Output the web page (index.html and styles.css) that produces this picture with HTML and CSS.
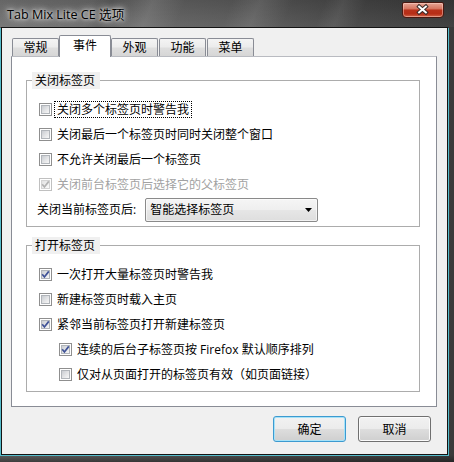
FILE: index.html
```html
<!DOCTYPE html>
<html lang="zh-CN">
<head>
<meta charset="utf-8">
<title>Tab Mix Lite CE 选项</title>
<link rel="stylesheet" href="styles.css">
</head>
<body>
<div class="window">
  <div class="titlebar">
    <span class="title">Tab Mix Lite CE 选项</span>
    <button class="close" aria-label="关闭">
      <svg width="42" height="16" viewBox="0 0 42 16">
        <path class="x-outline" d="M17.5 4.5 L24.5 10.5 M24.5 4.5 L17.5 10.5"/>
        <path class="x-core" d="M17.5 4.5 L24.5 10.5 M24.5 4.5 L17.5 10.5"/>
      </svg>
    </button>
  </div>

  <div class="edge">
    <div class="client">
      <div class="tabs">
        <div class="tab">常规</div>
        <div class="tab sel">事件</div>
        <div class="tab">外观</div>
        <div class="tab">功能</div>
        <div class="tab">菜单</div>
      </div>

      <div class="panel">
        <fieldset class="group">
          <legend>关闭标签页</legend>
          <label class="opt">
            <span class="cb"><span class="cb-in"></span></span>
            <span class="txt focus">关闭多个标签页时警告我</span>
          </label>
          <label class="opt">
            <span class="cb"><span class="cb-in"></span></span>
            <span class="txt">关闭最后一个标签页时同时关闭整个窗口</span>
          </label>
          <label class="opt">
            <span class="cb"><span class="cb-in"></span></span>
            <span class="txt">不允许关闭最后一个标签页</span>
          </label>
          <label class="opt disabled">
            <span class="cb"><span class="cb-in"><svg class="tick" width="9" height="9" viewBox="0 0 9 9"><path d="M1.2 4.3 L3.4 7 L7.8 1.4"/></svg></span></span>
            <span class="txt">关闭前台标签页后选择它的父标签页</span>
          </label>
          <div class="opt combo-row">
            <span class="combo-label">关闭当前标签页后:</span>
            <div class="combo">
              <span>智能选择标签页</span>
              <svg class="arrow" width="7" height="4" viewBox="0 0 7 4"><path d="M0 0 H7 L3.5 4 Z"/></svg>
            </div>
          </div>
        </fieldset>

        <fieldset class="group second">
          <legend>打开标签页</legend>
          <label class="opt">
            <span class="cb"><span class="cb-in"><svg class="tick" width="9" height="9" viewBox="0 0 9 9"><path d="M1.2 4.3 L3.4 7 L7.8 1.4"/></svg></span></span>
            <span class="txt">一次打开大量标签页时警告我</span>
          </label>
          <label class="opt">
            <span class="cb"><span class="cb-in"></span></span>
            <span class="txt">新建标签页时载入主页</span>
          </label>
          <label class="opt">
            <span class="cb"><span class="cb-in"><svg class="tick" width="9" height="9" viewBox="0 0 9 9"><path d="M1.2 4.3 L3.4 7 L7.8 1.4"/></svg></span></span>
            <span class="txt">紧邻当前标签页打开新建标签页</span>
          </label>
          <label class="opt sub">
            <span class="cb"><span class="cb-in"><svg class="tick" width="9" height="9" viewBox="0 0 9 9"><path d="M1.2 4.3 L3.4 7 L7.8 1.4"/></svg></span></span>
            <span class="txt">连续的后台子标签页按 Firefox 默认顺序排列</span>
          </label>
          <label class="opt sub">
            <span class="cb"><span class="cb-in"></span></span>
            <span class="txt">仅对从页面打开的标签页有效（如页面链接）</span>
          </label>
        </fieldset>
      </div>

      <div class="buttons">
        <button class="btn default">确定</button>
        <button class="btn">取消</button>
      </div>
    </div>
  </div>
</div>
</body>
</html>
```

FILE: styles.css
```css
html, body {
  margin: 0;
  padding: 0;
  background: #3a3a3a;
}

.window {
  width: 454px;
  height: 462px;
  display: flex;
  flex-direction: column;
  overflow: hidden;
  font-family: "Open Sans", "Noto Sans CJK SC", sans-serif;
  font-size: 12px;
  color: #000;
  background:
    linear-gradient(to bottom, rgba(0,0,0,0) 455px, rgba(0,0,0,0.35) 462px),
    linear-gradient(90deg, #5e5e5e 0%, #4c4c4c 50%, #3a3a3a 100%);
}

/* ---- glass title bar ---- */
.titlebar {
  height: 27px;
  flex: none;
  display: flex;
  align-items: center;
  background:
    linear-gradient(112deg,
      rgba(255,255,255,0) 20%,
      rgba(0,0,0,0.10) 24%,
      rgba(255,255,255,0) 28%,
      rgba(255,255,255,0.10) 33%,
      rgba(255,255,255,0) 40%,
      rgba(255,255,255,0) 50%,
      rgba(255,255,255,0.09) 56%,
      rgba(255,255,255,0) 63%,
      rgba(255,255,255,0) 70%,
      rgba(255,255,255,0.07) 74%,
      rgba(255,255,255,0) 79%),
    linear-gradient(to bottom, rgba(0,0,0,0.12), rgba(255,255,255,0.04)),
    linear-gradient(90deg, #747474 0%, #686868 25%, #5a5a5a 55%, #454545 80%, #3a3a3a 100%);
}

.title {
  margin: 2px 0 0 7px;
  flex: 1;
  font-size: 12.6px;
  line-height: 16px;
  white-space: nowrap;
  text-shadow:
    0 0 6px rgba(255,255,255,0.9),
    0 0 10px rgba(255,255,255,0.65),
    0 0 3px rgba(255,255,255,0.75);
}

.close {
  align-self: flex-start;
  flex: none;
  width: 42px;
  height: 16px;
  margin: 2px 10px 0 0;
  padding: 0;
  border: 1px solid #4b1810;
  border-radius: 2px 2px 4px 4px;
  background: linear-gradient(to bottom,
    #e7a596 0%, #d6735e 42%, #b9321b 50%, #b72d16 78%, #d2684c 100%);
  box-shadow: inset 0 0 0 1px rgba(255,220,210,0.45);
  display: flex;
  overflow: hidden;
}

.close svg {
  display: block;
  margin: -1px 0 0 -1px;
}

.x-outline {
  fill: none;
  stroke: #3a2a28;
  stroke-width: 4;
  stroke-linecap: square;
}

.x-core {
  fill: none;
  stroke: #fff;
  stroke-width: 2;
  stroke-linecap: square;
}

/* ---- client edge with the thin frame highlight ---- */
.edge {
  flex: 1;
  margin: 0 6px 7px 1px;
  border: 1px solid #141414;
  box-shadow: 1px 1px 0 #55bccb, -1px 1px 0 #55bccb;
  display: flex;
}

.client {
  flex: 1;
  background: #f0f0f0;
  display: flex;
  flex-direction: column;
}

/* ---- tabs ---- */
.tabs {
  display: flex;
  align-items: flex-end;
  height: 21px;
  margin-top: 7px;
  padding-left: 10px;
}

.tab {
  box-sizing: border-box;
  width: 47px;
  height: 18px;
  margin-right: 1px;
  border: 1px solid #898c95;
  border-bottom: none;
  border-radius: 2px 2px 0 0;
  background: linear-gradient(to bottom,
    #f4f4f4 0%, #ececec 45%, #dedede 55%, #d6d6d6 100%);
  display: flex;
  align-items: center;
  justify-content: center;
  line-height: 15px;
}

.tab.sel {
  position: relative;
  z-index: 1;
  width: 52px;
  height: 22px;
  margin: 0 0 -1px -1px;
  background: #fff;
  padding-bottom: 3px;
}

/* ---- tab page ---- */
.panel {
  box-sizing: border-box;
  height: 351px;
  margin: 0 10px 0 9px;
  background: #fff;
  border: 1px solid #898c95;
  border-top-color: #b9bbc1;
  padding: 15px 16px 0 14px;
}

.group {
  margin: 0;
  padding: 8px 0 4px 0;
  border: 1px solid #acacac;
  min-width: 0;
}

.group.second {
  margin-top: 10px;
}

.group legend {
  margin-left: 5px;
  padding: 0 5px 0 3px;
  height: 17px;
  line-height: 17px;
  background: #f0f0f0;
}

.opt {
  display: flex;
  align-items: center;
  height: 25px;
  padding-left: 12px;
}

.opt.sub {
  padding-left: 32px;
}

/* ---- check boxes ---- */
.cb {
  flex: none;
  box-sizing: border-box;
  width: 13px;
  height: 13px;
  border: 1px solid #8f8f8f;
  background: #fff;
  padding: 1px;
  display: flex;
}

.cb-in {
  flex: none;
  box-sizing: border-box;
  width: 9px;
  height: 9px;
  border: 1px solid #b1b5ba;
  background: linear-gradient(135deg, #c9ccd1 0%, #e4e5e7 55%, #f7f7f7 100%);
  display: flex;
}

.tick {
  display: block;
  flex: none;
  margin: -1px 0 0 -1px;
  overflow: visible;
}

.tick path {
  fill: none;
  stroke: #3f5297;
  stroke-width: 1.7;
}

.txt {
  margin-left: 2px;
  padding: 0 2px;
  border: 1px solid transparent;
  line-height: 15px;
  white-space: nowrap;
}

.txt.focus {
  border: 1px dotted #000;
}

.opt.disabled .txt {
  color: #a2a2a2;
}

.opt.disabled .cb {
  border-color: #c0c0c0;
}

.opt.disabled .cb-in {
  border-color: #d4d4d4;
  background: linear-gradient(135deg, #e2e2e2 0%, #f0f0f0 55%, #fbfbfb 100%);
}

.opt.disabled .tick path {
  stroke: #b2b2b2;
}

/* ---- drop-down ---- */
.combo-row {
  padding-left: 10px;
}

.combo-label {
  line-height: 15px;
  white-space: nowrap;
}

.combo {
  box-sizing: border-box;
  width: 173px;
  height: 24px;
  margin-left: 9px;
  padding: 0 5px 0 4px;
  border: 1px solid #8a8a8a;
  border-radius: 2px;
  background: linear-gradient(to bottom,
    #f5f5f5 0%, #efefef 48%, #e6e6e6 52%, #dedede 100%);
  box-shadow: inset 0 0 0 1px rgba(255,255,255,0.6);
  display: flex;
  align-items: center;
  justify-content: space-between;
  line-height: 15px;
}

.arrow path {
  fill: #000;
}

/* ---- dialog buttons ---- */
.buttons {
  display: flex;
  justify-content: flex-end;
  gap: 12px;
  margin-top: 9px;
  padding-right: 16px;
}

.btn {
  box-sizing: border-box;
  width: 73px;
  height: 26px;
  padding: 0;
  font: inherit;
  line-height: 15px;
  color: #000;
  border: 1px solid #707070;
  border-radius: 3px;
  background: linear-gradient(to bottom,
    #f2f2f2 0%, #ebebeb 48%, #dddddd 52%, #cfcfcf 100%);
  box-shadow: inset 0 0 0 1px #fbfbfb;
}

.btn.default {
  border-color: #3c9ad0;
  box-shadow: inset 0 0 0 1px #a6e2f8;
}
```
